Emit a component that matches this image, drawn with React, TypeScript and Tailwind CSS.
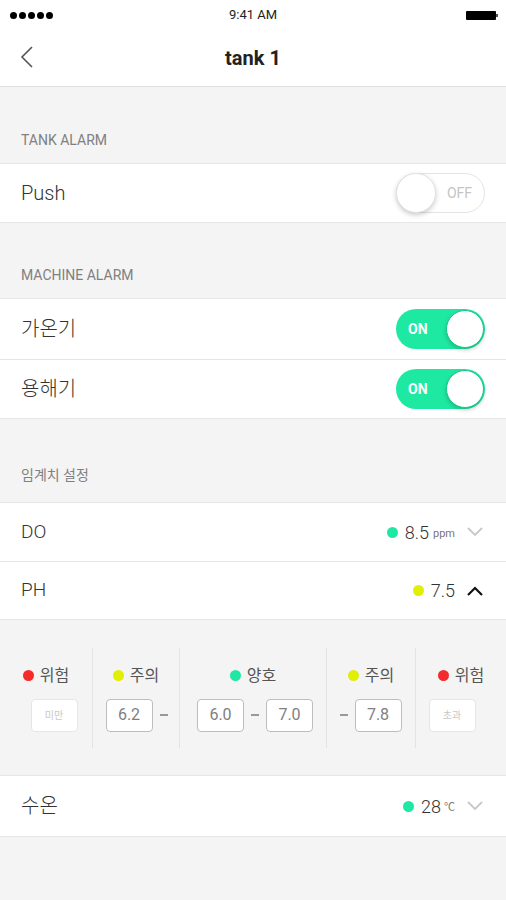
import React from 'react';

const font = { fontFamily: '"Roboto", "Noto Sans CJK KR", sans-serif' };

function Toggle({ on }: { on: boolean }) {
  if (on) {
    return (
      <div className="relative flex h-[40px] w-[89px] items-center rounded-full bg-[#1ee9a3]">
        <span className="ml-[12px] text-[14px] font-bold text-white">ON</span>
        <div className="absolute right-[1px] top-[1px] h-[38px] w-[38px] rounded-full border border-[#17c989] bg-white shadow-[0_2px_4px_rgba(0,0,0,0.2)]" />
      </div>
    );
  }
  return (
    <div className="relative flex h-[40px] w-[89px] items-center justify-end rounded-full border border-[#e4e4e4] bg-white">
      <span className="mr-[12px] text-[14px] text-[#c4c4c4]">OFF</span>
      <div className="absolute left-[-1px] top-[-1px] h-[40px] w-[40px] rounded-full border border-[#e2e2e2] bg-white shadow-[0_2px_5px_rgba(0,0,0,0.2)]" />
    </div>
  );
}

function Chevron({ up, dark }: { up?: boolean; dark?: boolean }) {
  return (
    <svg width="18" height="10" viewBox="0 0 18 10" className="ml-[11px]">
      <path
        d={up ? 'M2 9 L9 2 L16 9' : 'M2 1 L9 8 L16 1'}
        fill="none"
        stroke={dark ? '#111' : '#c8c8c8'}
        strokeWidth={dark ? 2.2 : 1.8}
      />
    </svg>
  );
}

function Dot({ color }: { color: string }) {
  return <span className={`inline-block h-[11px] w-[11px] rounded-full ${color}`} />;
}

function SectionHeader({ children, h, pb }: { children: React.ReactNode; h: string; pb: string }) {
  return (
    <div className={`flex items-end px-[21px] text-[14px] text-[#808080] ${h} ${pb}`}>{children}</div>
  );
}

function Box({ children, faint }: { children: React.ReactNode; faint?: boolean }) {
  return (
    <div
      className={`flex h-[33px] w-[47px] items-center justify-center rounded-[4px] border bg-white ${
        faint ? 'border-[#e6e6e6] text-[10px] text-[#c8c8c8]' : 'border-[#bdbdbd] text-[16px] text-[#808080]'
      }`}
    >
      {children}
    </div>
  );
}

function Dash() {
  return <span className="mx-[7px] h-[2px] w-[8px] bg-[#999]" />;
}

function Label({ color, text }: { color: string; text: string }) {
  return (
    <div className="flex items-center gap-[6px] text-[16px] text-[#555]">
      <Dot color={color} />
      <span>{text}</span>
    </div>
  );
}

export default function App() {
  return (
    <div className="min-h-[900px] w-[506px] bg-[#f4f4f4]" style={font}>
      <div className="bg-white">
        <div className="relative flex h-[30px] items-center justify-between px-[10px]">
          <div className="flex gap-[2px]">
            {[0, 1, 2, 3, 4].map((i) => (
              <span key={i} className="h-[7px] w-[7px] rounded-full bg-black" />
            ))}
          </div>
          <span className="absolute left-1/2 -translate-x-1/2 text-[13px] text-[#222]">9:41 AM</span>
          <div className="mr-[-2px] flex items-center">
            <div className="h-[9px] w-[30px] rounded-[1px] bg-black" />
            <div className="h-[3px] w-[2px] bg-[#555]" />
          </div>
        </div>
        <div className="relative flex h-[57px] items-center justify-center border-b border-[#e0e0e0]">
          <svg width="14" height="24" viewBox="0 0 14 24" className="absolute left-[20px] top-[15px]">
            <path d="M12 2 L2 12 L12 22" fill="none" stroke="#555" strokeWidth="1.6" />
          </svg>
          <span className="text-[20px] font-bold text-[#222]">tank 1</span>
        </div>
      </div>

      <SectionHeader h="h-[76px]" pb="pb-[12px]">TANK ALARM</SectionHeader>
      <div className="flex h-[60px] items-center justify-between border-y border-[#e6e6e6] bg-white pl-[21px] pr-[21px]">
        <span className="text-[20px] font-light text-[#333]">Push</span>
        <Toggle on={false} />
      </div>

      <SectionHeader h="h-[75px]" pb="pb-[12px]">MACHINE ALARM</SectionHeader>
      <div className="border-y border-[#e6e6e6] bg-white">
        <div className="flex h-[61px] items-center justify-between border-b border-[#e6e6e6] px-[21px]">
          <span className="text-[20px] font-light text-[#333]">가온기</span>
          <Toggle on />
        </div>
        <div className="flex h-[58px] items-center justify-between px-[21px]">
          <span className="text-[20px] font-light text-[#333]">용해기</span>
          <Toggle on />
        </div>
      </div>

      <SectionHeader h="h-[83px]" pb="pb-[16px]">임계치 설정</SectionHeader>
      <div className="border-y border-[#e6e6e6] bg-white">
        <div className="flex h-[59px] items-center justify-between border-b border-[#e6e6e6] pl-[21px] pr-[22px]">
          <span className="text-[19px] font-light text-[#333]">DO</span>
          <div className="flex items-center">
            <Dot color="bg-[#1ee9a3]" />
            <span className="ml-[7px] text-[18px] font-light text-[#333]">8.5</span>
            <span className="ml-[4px] mt-[4px] text-[11px] text-[#777]">ppm</span>
            <Chevron />
          </div>
        </div>
        <div className="flex h-[57px] items-center justify-between pl-[21px] pr-[22px]">
          <span className="text-[19px] font-light text-[#333]">PH</span>
          <div className="flex items-center">
            <Dot color="bg-[#e1ef05]" />
            <span className="ml-[7px] text-[18px] font-light text-[#333]">7.5</span>
            <Chevron up dark />
          </div>
        </div>
      </div>

      <div className="flex h-[155px] items-center bg-[#f4f4f4]">
        <div className="flex h-[100px] w-full">
          <div className="flex w-[93px] flex-col items-center justify-center gap-[11px] border-r border-[#e4e4e4]">
            <Label color="bg-[#f52a2a]" text="위험" />
            <div className="ml-[16px]">
              <Box faint>미만</Box>
            </div>
          </div>
          <div className="flex w-[87px] flex-col items-center justify-center gap-[11px] border-r border-[#e4e4e4]">
            <Label color="bg-[#e1ef05]" text="주의" />
            <div className="ml-[8px] flex items-center">
              <Box>6.2</Box>
              <Dash />
            </div>
          </div>
          <div className="flex w-[147px] flex-col items-center justify-center gap-[11px] border-r border-[#e4e4e4]">
            <Label color="bg-[#1ee9a3]" text="양호" />
            <div className="ml-[4px] flex items-center">
              <Box>6.0</Box>
              <Dash />
              <Box>7.0</Box>
            </div>
          </div>
          <div className="flex w-[89px] flex-col items-center justify-center gap-[11px] border-r border-[#e4e4e4]">
            <Label color="bg-[#e1ef05]" text="주의" />
            <div className="ml-[-8px] flex items-center">
              <Dash />
              <Box>7.8</Box>
            </div>
          </div>
          <div className="flex flex-1 flex-col items-center justify-center gap-[11px]">
            <Label color="bg-[#f52a2a]" text="위험" />
            <div className="mr-[18px]">
              <Box faint>초과</Box>
            </div>
          </div>
        </div>
      </div>

      <div className="flex h-[62px] items-center justify-between border-y border-[#e6e6e6] bg-white pl-[21px] pr-[22px]">
        <span className="text-[20px] font-light text-[#333]">수온</span>
        <div className="flex items-center">
          <Dot color="bg-[#1ee9a3]" />
          <span className="ml-[7px] text-[18px] font-light text-[#333]">28</span>
          <span className="ml-[3px] mt-[4px] text-[11px] text-[#777]">℃</span>
          <Chevron />
        </div>
      </div>
    </div>
  );
}
